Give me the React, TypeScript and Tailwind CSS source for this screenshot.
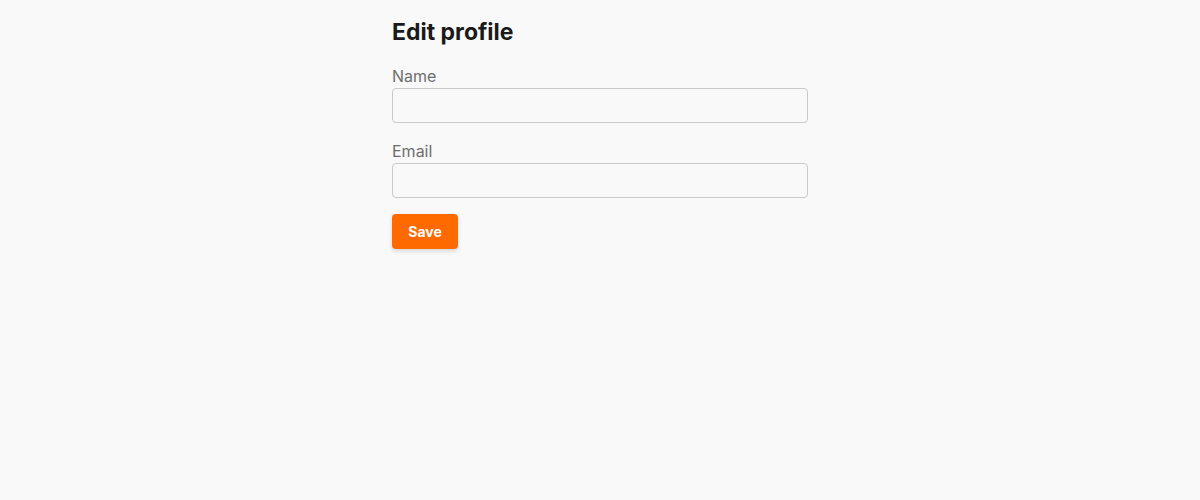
import React from 'react';

export default function App() {
  return (
    <div className="min-h-[500px] bg-[#f9f9f9] font-['Inter',sans-serif]">
      <div className="mx-auto w-[416px] pt-4">
        <h1 className="text-[23px] leading-8 font-bold text-[#1a1a1a]">Edit profile</h1>
        <form className="mt-4 flex flex-col" onSubmit={(e) => e.preventDefault()}>
          <label className="block text-base leading-6 text-[#6e6e6e]">Name</label>
          <input
            type="text"
            className="h-[35px] w-full rounded border border-[#c9c9c9] bg-[#f9f9f9] px-2 outline-none"
          />
          <label className="mt-4 block text-base leading-6 text-[#6e6e6e]">Email</label>
          <input
            type="email"
            className="h-[35px] w-full rounded border border-[#c9c9c9] bg-[#f9f9f9] px-2 outline-none"
          />
          <div className="mt-4">
            <button
              type="submit"
              className="h-[35px] w-[66px] rounded bg-[#ff6a00] text-sm font-bold text-white shadow-[0_2px_4px_rgba(0,0,0,0.15)]"
            >
              Save
            </button>
          </div>
        </form>
      </div>
    </div>
  );
}
